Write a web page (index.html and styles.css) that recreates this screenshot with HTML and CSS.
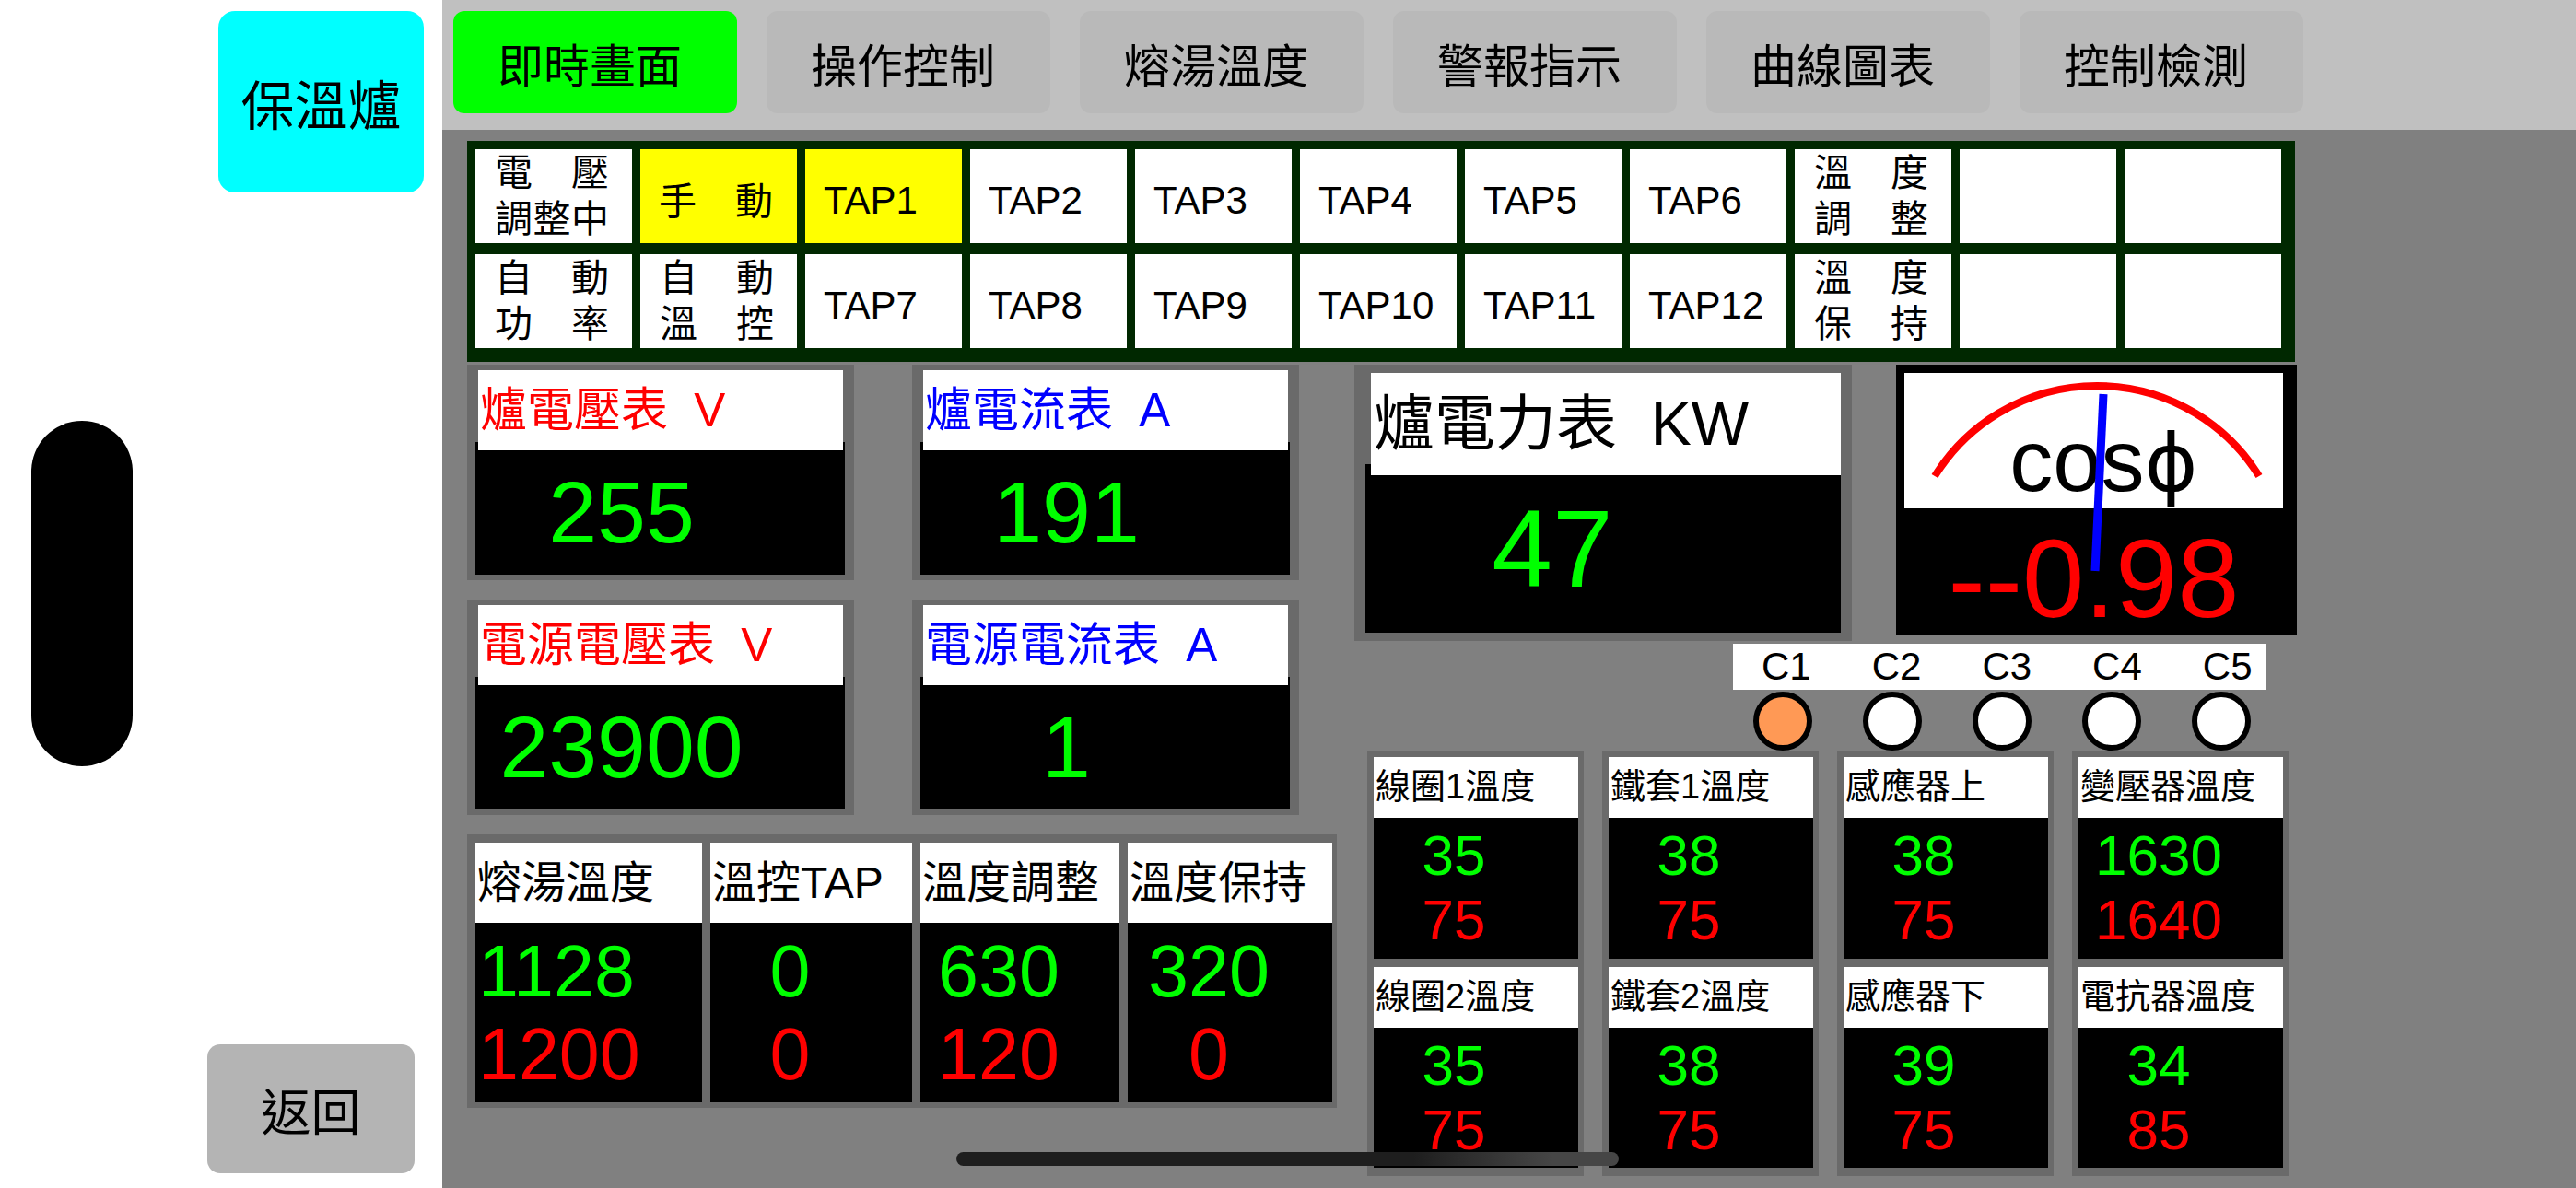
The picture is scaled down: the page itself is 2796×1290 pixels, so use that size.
FILE: index.html
```html
<!DOCTYPE html>
<html lang="zh-Hant">
<head>
<meta charset="utf-8">
<title>保溫爐</title>
<link rel="stylesheet" href="styles.css">
</head>
<body>
<div class="screen">
  <aside class="side">
    <div class="brand">保溫爐</div>
    <div class="island"></div>
    <div class="back">返回</div>
  </aside>
  <main class="main">
    <nav class="tabs">
      <div class="tab active">即時畫面</div>
      <div class="tab">操作控制</div>
      <div class="tab">熔湯溫度</div>
      <div class="tab">警報指示</div>
      <div class="tab">曲線圖表</div>
      <div class="tab">控制檢測</div>
    </nav>
    <section class="content">
      <div class="panel">
        <div class="cell two"><div class="ln"><span>電</span><span>壓</span></div><div class="ln"><span>調</span><span>整</span><span>中</span></div></div>
        <div class="cell spread yellow"><span>手</span><span>動</span></div>
        <div class="cell yellow">TAP1</div>
        <div class="cell">TAP2</div>
        <div class="cell">TAP3</div>
        <div class="cell">TAP4</div>
        <div class="cell">TAP5</div>
        <div class="cell">TAP6</div>
        <div class="cell two"><div class="ln"><span>溫</span><span>度</span></div><div class="ln"><span>調</span><span>整</span></div></div>
        <div class="cell"></div>
        <div class="cell"></div>
        <div class="cell two"><div class="ln"><span>自</span><span>動</span></div><div class="ln"><span>功</span><span>率</span></div></div>
        <div class="cell two"><div class="ln"><span>自</span><span>動</span></div><div class="ln"><span>溫</span><span>控</span></div></div>
        <div class="cell">TAP7</div>
        <div class="cell">TAP8</div>
        <div class="cell">TAP9</div>
        <div class="cell">TAP10</div>
        <div class="cell">TAP11</div>
        <div class="cell">TAP12</div>
        <div class="cell two"><div class="ln"><span>溫</span><span>度</span></div><div class="ln"><span>保</span><span>持</span></div></div>
        <div class="cell"></div>
        <div class="cell"></div>
      </div>

      <div class="lower">
        <div class="left">
          <div class="meters">
            <div class="meter">
              <div class="meter-label red">爐電壓表  V</div>
              <div class="meter-body">255</div>
            </div>
            <div class="meter">
              <div class="meter-label blue">爐電流表  A</div>
              <div class="meter-body">191</div>
            </div>
            <div class="meter">
              <div class="meter-label red">電源電壓表  V</div>
              <div class="meter-body">23900</div>
            </div>
            <div class="meter">
              <div class="meter-label blue">電源電流表  A</div>
              <div class="meter-body">1</div>
            </div>
          </div>
          <div class="ttable">
            <div class="tcol">
              <div class="tlabel">熔湯溫度</div>
              <div class="tvals first"><span class="g">1128</span><span class="r">1200</span></div>
            </div>
            <div class="tcol">
              <div class="tlabel">溫控TAP</div>
              <div class="tvals"><span class="g">0</span><span class="r">0</span></div>
            </div>
            <div class="tcol">
              <div class="tlabel">溫度調整</div>
              <div class="tvals"><span class="g">630</span><span class="r">120</span></div>
            </div>
            <div class="tcol">
              <div class="tlabel">溫度保持</div>
              <div class="tvals"><span class="g">320</span><span class="r">0</span></div>
            </div>
          </div>
        </div>

        <div class="right">
          <div class="toprow">
            <div class="power">
              <div class="power-label">爐電力表  KW</div>
              <div class="power-body">47</div>
            </div>
            <div class="cosm">
              <div class="cos-label">cos<span class="phi">ϕ</span></div>
              <div class="cos-val">--0.98</div>
              <svg class="cos-svg" width="435" height="293" viewBox="0 0 435 293">
                <path d="M 42 121 A 207 207 0 0 1 394 121" fill="none" stroke="#ff0000" stroke-width="8"/>
                <line x1="225" y1="32" x2="216" y2="224" stroke="#0000ff" stroke-width="9"/>
              </svg>
            </div>
          </div>
          <div class="clabels"><span>C1</span><span>C2</span><span>C3</span><span>C4</span><span>C5</span></div>
          <div class="leds">
            <div class="led on"></div>
            <div class="led"></div>
            <div class="led"></div>
            <div class="led"></div>
            <div class="led"></div>
          </div>
          <div class="tgrid">
            <div class="tg">
              <div class="tg-cell"><div class="tg-label">線圈1溫度</div><div class="tg-vals"><span class="g">35</span><span class="r">75</span></div></div>
              <div class="tg-cell"><div class="tg-label">線圈2溫度</div><div class="tg-vals"><span class="g">35</span><span class="r">75</span></div></div>
            </div>
            <div class="tg">
              <div class="tg-cell"><div class="tg-label">鐵套1溫度</div><div class="tg-vals"><span class="g">38</span><span class="r">75</span></div></div>
              <div class="tg-cell"><div class="tg-label">鐵套2溫度</div><div class="tg-vals"><span class="g">38</span><span class="r">75</span></div></div>
            </div>
            <div class="tg">
              <div class="tg-cell"><div class="tg-label">感應器上</div><div class="tg-vals"><span class="g">38</span><span class="r">75</span></div></div>
              <div class="tg-cell"><div class="tg-label">感應器下</div><div class="tg-vals"><span class="g">39</span><span class="r">75</span></div></div>
            </div>
            <div class="tg">
              <div class="tg-cell"><div class="tg-label">變壓器溫度</div><div class="tg-vals"><span class="g">1630</span><span class="r">1640</span></div></div>
              <div class="tg-cell"><div class="tg-label">電抗器溫度</div><div class="tg-vals"><span class="g">34</span><span class="r">85</span></div></div>
            </div>
          </div>
        </div>
      </div>
    </section>
  </main>
  <div class="home"></div>
</div>
</body>
</html>
```

FILE: styles.css
```css
* { box-sizing: border-box; }
html, body { margin: 0; padding: 0; }
body {
  font-family: "Liberation Sans", "Noto Sans CJK TC", sans-serif;
  color: #000;
  background: #fff;
}
.screen {
  position: relative;
  display: flex;
  width: 2796px;
  height: 1290px;
  overflow: hidden;
}

/* left side */
.side {
  width: 480px;
  flex: none;
  background: #fff;
  display: flex;
  flex-direction: column;
  align-items: flex-start;
}
.brand {
  margin: 12px 0 0 237px;
  width: 223px;
  height: 197px;
  background: #00ffff;
  border-radius: 18px;
  display: flex;
  align-items: center;
  justify-content: center;
  font-size: 58px;
}
.island {
  margin: 248px 0 0 34px;
  width: 110px;
  height: 375px;
  border-radius: 55px;
  background: #000;
}
.back {
  margin: 302px 0 0 225px;
  width: 225px;
  height: 140px;
  border-radius: 14px;
  background: #b4b4b4;
  display: flex;
  align-items: center;
  justify-content: center;
  font-size: 54px;
}

/* main */
.main {
  flex: 1;
  background: #808080;
  display: flex;
  flex-direction: column;
}
.tabs {
  height: 141px;
  background: #c0c0c0;
  display: flex;
  gap: 32px;
  padding: 12px;
  flex: none;
}
.tab {
  width: 308px;
  height: 111px;
  border-radius: 12px;
  background: #b9b9b9;
  display: flex;
  align-items: center;
  justify-content: center;
  padding-right: 12px;
  font-size: 50px;
}
.tab.active { background: #00ff00; }

.content {
  padding: 12px 0 0 27px;
  display: flex;
  flex-direction: column;
  align-items: flex-start;
}

/* TAP panel */
.panel {
  background: #002800;
  padding: 9px 15px 15px 9px;
  display: grid;
  grid-template-columns: repeat(11, 170px);
  grid-template-rows: 102px 102px;
  column-gap: 9px;
  row-gap: 12px;
}
.cell {
  background: #fff;
  font-size: 42px;
  display: flex;
  align-items: center;
  padding: 9px 0 0 20px;
  white-space: nowrap;
}
.cell.yellow { background: #ffff00; }
.cell.spread {
  justify-content: space-between;
  padding: 4px 26px 0 20px;
  font-size: 41px;
}
.cell.two {
  flex-direction: column;
  justify-content: center;
  align-items: stretch;
  padding: 0 25px 0 21px;
  font-size: 41px;
  line-height: 50px;
}
.cell.two .ln {
  display: flex;
  justify-content: space-between;
}

/* lower area */
.lower {
  margin-top: 3px;
  display: flex;
  gap: 19px;
  align-items: flex-start;
}
.left {
  width: 944px;
  display: flex;
  flex-direction: column;
}
.meters {
  display: grid;
  grid-template-columns: 420px 420px;
  column-gap: 63px;
  row-gap: 21px;
}
.meter {
  height: 234px;
  background: #6a6a6a;
  padding: 6px 10px 6px 9px;
  display: flex;
  flex-direction: column;
}
.meter-label {
  position: relative;
  z-index: 1;
  height: 87px;
  margin: 0 2px 0 3px;
  background: #fff;
  display: flex;
  align-items: center;
  padding-left: 2px;
  font-size: 51px;
  line-height: 1.2;
  white-space: pre;
}
.red { color: #ff0000; }
.blue { color: #0000ff; }
.meter-body {
  flex: 1;
  margin-top: -9px;
  padding: 9px 84px 0 0;
  background: #000;
  display: flex;
  align-items: center;
  justify-content: center;
  color: #00ff00;
  font-size: 95px;
  line-height: 1;
}

.ttable {
  margin-top: 21px;
  height: 297px;
  background: #6a6a6a;
  padding: 9px 5px 6px 9px;
  display: grid;
  grid-template-columns: 246px 219px 216px 222px;
  column-gap: 9px;
}
.tcol {
  display: flex;
  flex-direction: column;
}
.tlabel {
  height: 87px;
  background: #fff;
  display: flex;
  align-items: center;
  padding-left: 2px;
  font-size: 48px;
  line-height: 1.2;
  white-space: nowrap;
}
.tvals {
  flex: 1;
  background: #000;
  display: flex;
  flex-direction: column;
  justify-content: center;
  align-items: center;
  padding-right: 46px;
  font-size: 79px;
  line-height: 90px;
}
.tvals.first {
  align-items: flex-start;
  padding: 0 0 0 3px;
}
.g { color: #00ff00; }
.r { color: #ff0000; }

/* right column */
.right {
  width: 1023px;
  display: flex;
  flex-direction: column;
  align-items: flex-start;
}
.toprow {
  display: flex;
  gap: 48px;
  align-items: flex-start;
}
.power {
  width: 540px;
  height: 300px;
  background: #6a6a6a;
  padding: 9px 12px;
  display: flex;
  flex-direction: column;
}
.power-label {
  position: relative;
  z-index: 1;
  height: 111px;
  margin-left: 6px;
  background: #fff;
  display: flex;
  align-items: center;
  padding-left: 3px;
  font-size: 66px;
  line-height: 1.2;
  white-space: pre;
}
.power-body {
  flex: 1;
  margin-top: -12px;
  padding: 12px 110px 12px 0;
  background: #000;
  display: flex;
  align-items: center;
  justify-content: center;
  color: #00ff00;
  font-size: 118px;
  line-height: 1;
}
.cosm {
  position: relative;
  width: 435px;
  height: 293px;
  background: #000;
  padding: 9px 15px 0 9px;
}
.cos-label {
  height: 147px;
  background: #fff;
  padding: 49px 0 0 22px;
  text-align: center;
  font-size: 94px;
  line-height: 94px;
  white-space: nowrap;
}
.phi {
  font-family: "DejaVu Sans", "Liberation Sans", sans-serif;
  font-size: 88px;
}
.cos-val {
  margin-top: 16px;
  text-align: center;
  color: #ff0000;
  font-size: 121px;
  line-height: 121px;
}
.cos-svg {
  position: absolute;
  left: 0;
  top: 0;
}

.clabels {
  margin: 3px 0 0 411px;
  width: 578px;
  height: 50px;
  background: #fff;
  display: flex;
  gap: 66px;
  padding-left: 31px;
  font-size: 42px;
  line-height: 50px;
}
.leds {
  display: flex;
  gap: 55px;
  margin: 2px 0 0 433px;
}
.led {
  width: 64px;
  height: 64px;
  border-radius: 50%;
  border: 6px solid #000;
  background: #fff;
}
.led.on { background: #ff9955; }

.tgrid {
  margin: 1px 0 0 14px;
  display: grid;
  grid-template-columns: repeat(4, 235px);
  column-gap: 20px;
}
.tg {
  height: 461px;
  background: #6a6a6a;
  padding: 6px 6px 9px 7px;
  display: flex;
  flex-direction: column;
  gap: 9px;
}
.tg-cell {
  flex: 1;
  display: flex;
  flex-direction: column;
}
.tg-label {
  height: 66px;
  background: #fff;
  display: flex;
  align-items: center;
  padding-left: 2px;
  font-size: 38px;
  line-height: 1.2;
  white-space: nowrap;
}
.tg-vals {
  flex: 1;
  background: #000;
  display: flex;
  flex-direction: column;
  justify-content: center;
  align-items: center;
  padding-right: 48px;
  font-size: 62px;
  line-height: 70px;
}

.home {
  position: absolute;
  left: 1038px;
  top: 1251px;
  width: 719px;
  height: 15px;
  border-radius: 8px;
  background: linear-gradient(to right, #1e1e1e 0%, #1e1e1e 69%, #464646 90%, #464646 100%);
}
```
